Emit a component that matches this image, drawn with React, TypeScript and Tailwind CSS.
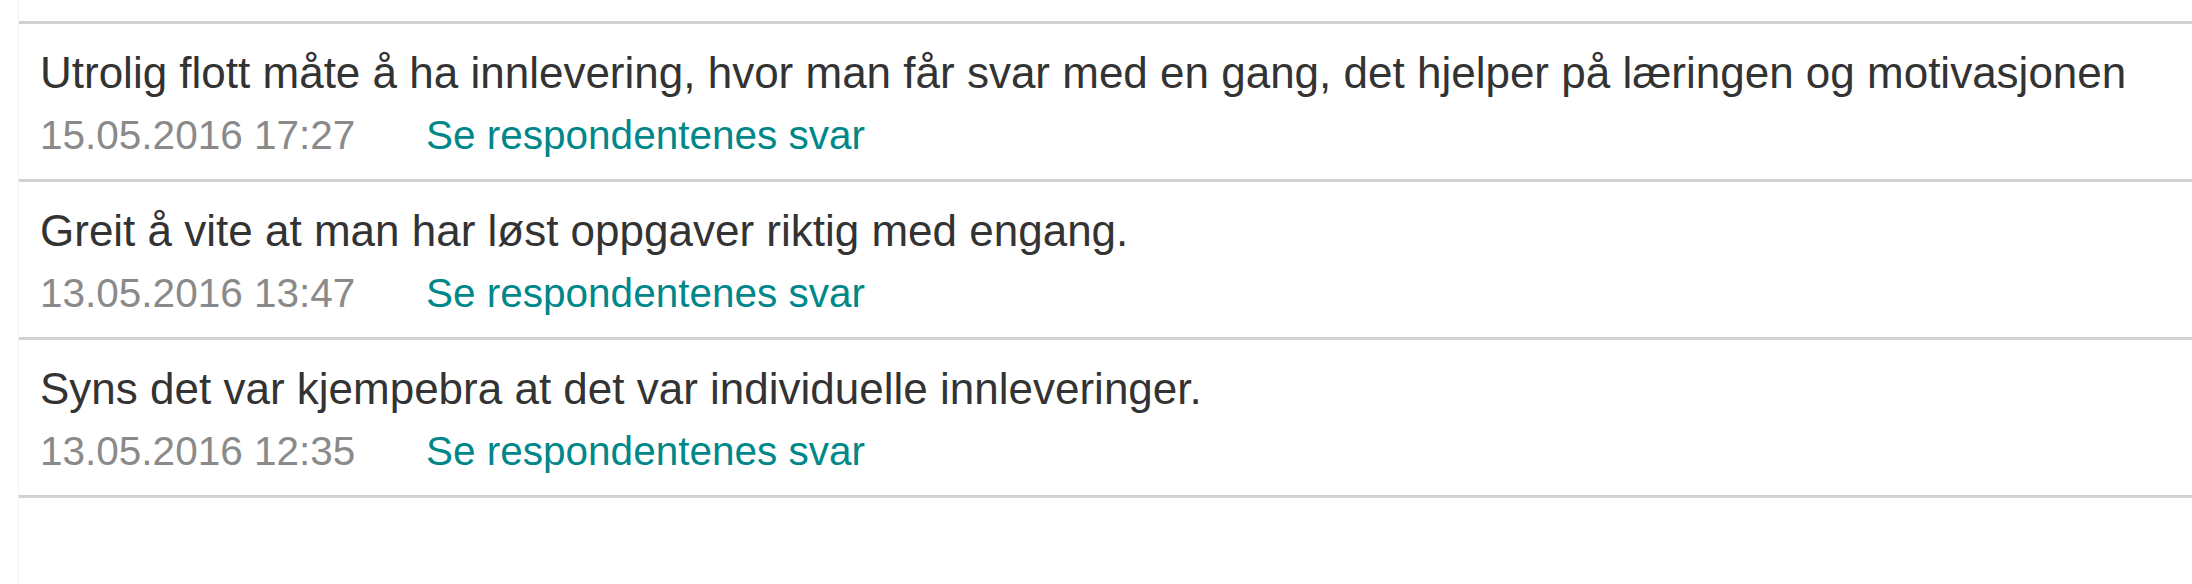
import React from "react";

type Answer = {
  text: string;
  date: string;
};

const answers: Answer[] = [
  {
    text: "Utrolig flott måte å ha innlevering, hvor man får svar med en gang, det hjelper på læringen og motivasjonen",
    date: "15.05.2016 17:27",
  },
  {
    text: "Greit å vite at man har løst oppgaver riktig med engang.",
    date: "13.05.2016 13:47",
  },
  {
    text: "Syns det var kjempebra at det var individuelle innleveringer.",
    date: "13.05.2016 12:35",
  },
];

export default function App() {
  return (
    <div
      className="min-h-[584px] w-full bg-white pl-[18px]"
      style={{ fontFamily: '"Liberation Sans", Arial, sans-serif' }}
    >
      <div className="min-h-[584px] border-l border-[#f3f3f3] pt-[21px]">
        {answers.map((a) => (
          <div
            key={a.date}
            className="border-t-[3px] border-[#d2d2d2] pl-[21px] pt-[19px] pb-[14px]"
          >
            <div className="text-[44px] leading-[60px] text-[#333333]">{a.text}</div>
            <div className="mt-[2px] flex text-[40.5px] leading-[60px]">
              <span className="w-[386px] text-[#8a8a8a]">{a.date}</span>
              <a href="#" className="text-[#00878a]">
                Se respondentenes svar
              </a>
            </div>
          </div>
        ))}
        <div className="border-t-[3px] border-[#d2d2d2]" />
      </div>
    </div>
  );
}
